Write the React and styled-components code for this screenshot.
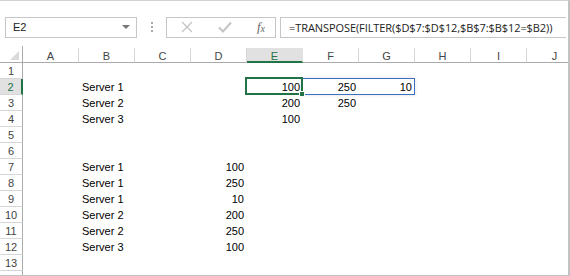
import React from 'react';
import styled, { createGlobalStyle } from 'styled-components';

const GlobalStyle = createGlobalStyle`
  * { box-sizing: border-box; }
  body {
    margin: 0;
    background: #fff;
    font-family: "Liberation Sans", Arial, sans-serif;
  }
`;

const COLS = ['A', 'B', 'C', 'D', 'E', 'F', 'G', 'H', 'I', 'J'];
const ROW_HEAD = 23;
const COL_W = 56;
const ROW_H = 16;
const HEAD_H = 17;

const cells = {
  '2': { B: 'Server 1', E: '100', F: '250', G: '10' },
  '3': { B: 'Server 2', E: '200', F: '250' },
  '4': { B: 'Server 3', E: '100' },
  '7': { B: 'Server 1', D: '100' },
  '8': { B: 'Server 1', D: '250' },
  '9': { B: 'Server 1', D: '10' },
  '10': { B: 'Server 2', D: '200' },
  '11': { B: 'Server 2', D: '250' },
  '12': { B: 'Server 3', D: '100' },
};

function App() {
  // row 14 is only partly visible at the bottom edge, so it gets no number
  const rows = Array.from({ length: 14 }, (_, i) => i + 1);
  const selLeft = ROW_HEAD + 4 * COL_W;
  const selTop = HEAD_H + ROW_H;

  return (
    <>
      <GlobalStyle />
      <Window>
        <Toolbar>
          <NameBox>
            <span>E2</span>
            <Caret />
          </NameBox>
          <Grip>
            <i /><i /><i />
          </Grip>
          <FxButtons>
            <svg width="14" height="14" viewBox="0 0 14 14">
              <path d="M2 2 L12 12 M12 2 L2 12" stroke="#c4c4c4" strokeWidth="1.3" fill="none" />
            </svg>
            <svg width="16" height="14" viewBox="0 0 16 14">
              <path d="M2 7.5 L6 11.5 L14 2.5" stroke="#c4c4c4" strokeWidth="2" fill="none" />
            </svg>
            <FxLabel>f<sub>x</sub></FxLabel>
          </FxButtons>
          <FormulaBox>=TRANSPOSE(FILTER($D$7:$D$12,$B$7:$B$12=$B2))</FormulaBox>
        </Toolbar>

        <Sheet>
          <Corner />
          {COLS.map((c) => (
            <ColHead key={c} $active={c === 'E'}>{c}</ColHead>
          ))}
          {rows.map((r) => (
            <React.Fragment key={r}>
              <RowHead $active={r === 2}>{r < 14 ? r : ''}</RowHead>
              {COLS.map((c) => {
                const v = cells[r] && cells[r][c];
                return (
                  <Cell key={c} $num={v && !isNaN(Number(v))}>
                    {v || ''}
                  </Cell>
                );
              })}
            </React.Fragment>
          ))}

          <SpillRange style={{ left: selLeft + COL_W - 1, top: selTop - 1, width: 2 * COL_W + 1, height: ROW_H + 1 }} />
          <ActiveCell style={{ left: selLeft - 2, top: selTop - 2, width: COL_W + 2, height: ROW_H + 2 }}>
            <FillHandle />
          </ActiveCell>
        </Sheet>
      </Window>
    </>
  );
}
export default App;

const Window = styled.div`
  width: 570px;
  height: 276px;
  border-top: 1px solid #d2d2d2;
  border-right: 2px solid #c2c2c2;
  border-bottom: 1px solid #c2c2c2;
  overflow: hidden;
  background: #fff;
`;

const Toolbar = styled.div`
  display: flex;
  align-items: center;
  height: 45px;
  padding: 7px 0 0 5px;
`;

const NameBox = styled.div`
  display: flex;
  align-items: center;
  justify-content: space-between;
  width: 132px;
  height: 21px;
  padding: 0 6px 0 7px;
  border: 1px solid #c6c6c6;
  font-size: 11px;
  color: #222;
`;

const Caret = styled.span`
  width: 0;
  height: 0;
  border-left: 4px solid transparent;
  border-right: 4px solid transparent;
  border-top: 4px solid #777;
`;

const Grip = styled.div`
  display: flex;
  flex-direction: column;
  gap: 2px;
  margin: 0 13px 0 14px;

  i {
    display: block;
    width: 2px;
    height: 2px;
    background: #a8a8a8;
  }
`;

const FxButtons = styled.div`
  display: flex;
  align-items: center;
  justify-content: space-between;
  width: 110px;
  height: 21px;
  padding: 0 10px 0 13px;
  border: 1px solid #c6c6c6;
`;

const FxLabel = styled.span`
  font-family: "Liberation Serif", "Times New Roman", serif;
  font-style: italic;
  font-size: 13px;
  color: #666;

  sub {
    font-size: 10px;
    vertical-align: -1px;
  }
`;

const FormulaBox = styled.div`
  display: flex;
  align-items: center;
  width: 286px;
  height: 21px;
  margin-left: 4px;
  padding-left: 8px;
  border: 1px solid #c6c6c6;
  border-right: none;
  font-family: "Open Sans", sans-serif;
  font-size: 11px;
  letter-spacing: -0.08px;
  color: #222;
  white-space: nowrap;
`;

const Sheet = styled.div`
  position: relative;
  display: grid;
  grid-template-columns: ${ROW_HEAD}px repeat(${COLS.length}, ${COL_W}px);
  grid-template-rows: ${HEAD_H}px repeat(14, ${ROW_H}px);
`;

const Corner = styled.div`
  position: relative;
  border-right: 1px solid #ababab;
  border-bottom: 1px solid #ababab;

  &::after {
    content: '';
    position: absolute;
    right: 3px;
    bottom: 2px;
    width: 0;
    height: 0;
    border-left: 9px solid transparent;
    border-bottom: 9px solid #dadada;
  }
`;

const ColHead = styled.div`
  display: flex;
  align-items: center;
  justify-content: center;
  padding-top: 2px;
  font-size: 11px;
  color: ${(p) => (p.$active ? '#217346' : '#444')};
  background: ${(p) => (p.$active ? '#e1e1e1' : '#fff')};
  border-right: 1px solid ${(p) => (p.$active ? '#e1e1e1' : '#d6d6d6')};
  border-bottom: ${(p) => (p.$active ? '2px solid #217346' : '1px solid #ababab')};
  margin-top: 2px;
`;

const RowHead = styled.div`
  display: flex;
  align-items: center;
  justify-content: center;
  padding-top: 1px;
  font-size: 11px;
  color: ${(p) => (p.$active ? '#217346' : '#444')};
  background: ${(p) => (p.$active ? '#e1e1e1' : '#fff')};
  border-bottom: 1px solid #d6d6d6;
  border-right: ${(p) => (p.$active ? '2px solid #217346' : '1px solid #ababab')};
`;

const Cell = styled.div`
  display: flex;
  align-items: flex-end;
  justify-content: ${(p) => (p.$num ? 'flex-end' : 'flex-start')};
  padding: 0 3px 1px 3px;
  font-size: 11px;
  line-height: 14px;
  color: #000;
  white-space: nowrap;
`;

const ActiveCell = styled.div`
  position: absolute;
  border: 2px solid #217346;
`;

const SpillRange = styled.div`
  position: absolute;
  border: 1px solid #3c6fc4;
  box-shadow: 0 0 4px rgba(0, 0, 0, 0.12);
`;

const FillHandle = styled.div`
  position: absolute;
  right: -4px;
  bottom: -4px;
  width: 6px;
  height: 6px;
  background: #217346;
  border: 1px solid #fff;
`;
